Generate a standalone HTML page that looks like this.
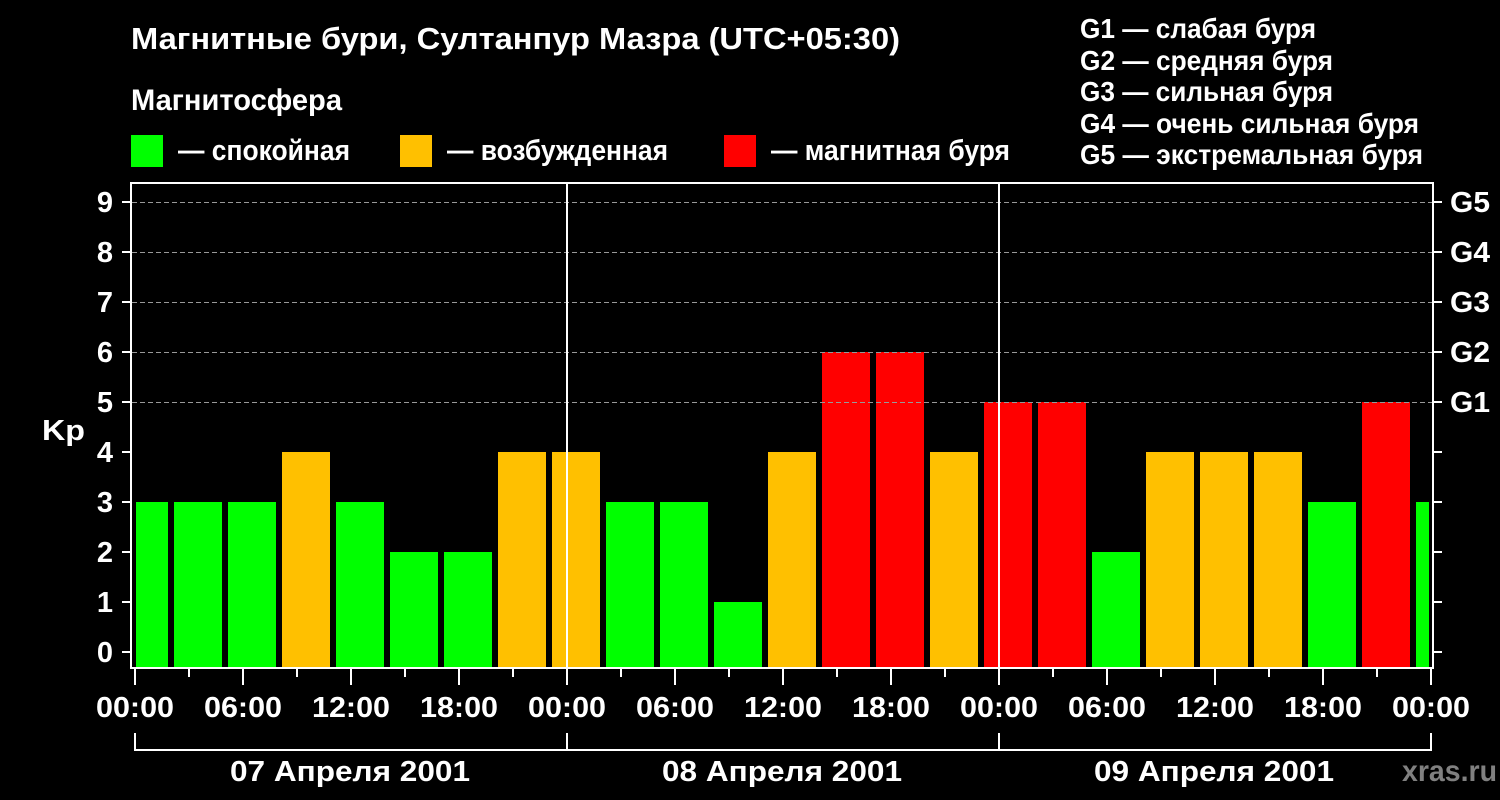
<!DOCTYPE html>
<html><head><meta charset="utf-8"><style>
html,body{margin:0;padding:0;background:#000;}
svg{display:block;}
text{font-family:"Liberation Sans",Arial,sans-serif;font-weight:bold;fill:#fff;}
</style></head><body>
<svg width="1500" height="800" xmlns="http://www.w3.org/2000/svg">
<rect width="1500" height="800" fill="#000"/>
<text x="131" y="49" font-size="31" textLength="769" lengthAdjust="spacingAndGlyphs">Магнитные бури, Султанпур Мазра (UTC+05:30)</text>
<text x="131" y="110" font-size="30" textLength="211" lengthAdjust="spacingAndGlyphs">Магнитосфера</text>
<rect x="131" y="135" width="32" height="32" fill="#00ff00"/>
<text x="178" y="160" font-size="29" textLength="172" lengthAdjust="spacingAndGlyphs">— спокойная</text>
<rect x="400" y="135" width="32" height="32" fill="#ffc000"/>
<text x="447" y="160" font-size="29" textLength="221" lengthAdjust="spacingAndGlyphs">— возбужденная</text>
<rect x="724" y="135" width="32" height="32" fill="#ff0000"/>
<text x="771" y="160" font-size="29" textLength="239" lengthAdjust="spacingAndGlyphs">— магнитная буря</text>
<g font-size="28">
<text x="1080" y="38" textLength="236" lengthAdjust="spacingAndGlyphs">G1 — слабая буря</text>
<text x="1080" y="70" textLength="253" lengthAdjust="spacingAndGlyphs">G2 — средняя буря</text>
<text x="1080" y="101" textLength="253" lengthAdjust="spacingAndGlyphs">G3 — сильная буря</text>
<text x="1080" y="133" textLength="339" lengthAdjust="spacingAndGlyphs">G4 — очень сильная буря</text>
<text x="1080" y="164" textLength="343" lengthAdjust="spacingAndGlyphs">G5 — экстремальная буря</text>
</g>
<svg x="132" y="183" width="1300" height="485" viewBox="132 183 1300 485" overflow="hidden">
<rect x="120" y="502" width="48" height="166" fill="#00ff00"/>
<rect x="174" y="502" width="48" height="166" fill="#00ff00"/>
<rect x="228" y="502" width="48" height="166" fill="#00ff00"/>
<rect x="282" y="452" width="48" height="216" fill="#ffc000"/>
<rect x="336" y="502" width="48" height="166" fill="#00ff00"/>
<rect x="390" y="552" width="48" height="116" fill="#00ff00"/>
<rect x="444" y="552" width="48" height="116" fill="#00ff00"/>
<rect x="498" y="452" width="48" height="216" fill="#ffc000"/>
<rect x="552" y="452" width="48" height="216" fill="#ffc000"/>
<rect x="606" y="502" width="48" height="166" fill="#00ff00"/>
<rect x="660" y="502" width="48" height="166" fill="#00ff00"/>
<rect x="714" y="602" width="48" height="66" fill="#00ff00"/>
<rect x="768" y="452" width="48" height="216" fill="#ffc000"/>
<rect x="822" y="352" width="48" height="316" fill="#ff0000"/>
<rect x="876" y="352" width="48" height="316" fill="#ff0000"/>
<rect x="930" y="452" width="48" height="216" fill="#ffc000"/>
<rect x="984" y="402" width="48" height="266" fill="#ff0000"/>
<rect x="1038" y="402" width="48" height="266" fill="#ff0000"/>
<rect x="1092" y="552" width="48" height="116" fill="#00ff00"/>
<rect x="1146" y="452" width="48" height="216" fill="#ffc000"/>
<rect x="1200" y="452" width="48" height="216" fill="#ffc000"/>
<rect x="1254" y="452" width="48" height="216" fill="#ffc000"/>
<rect x="1308" y="502" width="48" height="166" fill="#00ff00"/>
<rect x="1362" y="402" width="48" height="266" fill="#ff0000"/>
<rect x="1416" y="502" width="48" height="166" fill="#00ff00"/>
<rect x="1429" y="183" width="10" height="490" fill="#000"/>
<rect x="130" y="183" width="6" height="490" fill="#000"/>
</svg>
<g stroke="#999" stroke-width="1" stroke-dasharray="5,3">
<line x1="132" y1="202.5" x2="1432" y2="202.5"/>
<line x1="132" y1="252.5" x2="1432" y2="252.5"/>
<line x1="132" y1="302.5" x2="1432" y2="302.5"/>
<line x1="132" y1="352.5" x2="1432" y2="352.5"/>
<line x1="132" y1="402.5" x2="1432" y2="402.5"/>
</g>
<g stroke="#fff" stroke-width="2" fill="none">
<line x1="567" y1="182" x2="567" y2="668"/>
<line x1="999" y1="182" x2="999" y2="668"/>
<rect x="131" y="183" width="1302" height="485"/>
<path d="M122 202H131M122 252H131M122 302H131M122 352H131M122 402H131M122 452H131M122 502H131M122 552H131M122 602H131M122 652H131"/>
<path d="M1433 202H1442M1433 252H1442M1433 302H1442M1433 352H1442M1433 402H1442M1433 452H1442M1433 502H1442M1433 552H1442M1433 602H1442M1433 652H1442"/>
<path d="M135 668V685M243 668V685M351 668V685M459 668V685M567 668V685M675 668V685M783 668V685M891 668V685M999 668V685M1107 668V685M1215 668V685M1323 668V685M1431 668V685"/>
<path d="M189 668V677M297 668V677M405 668V677M513 668V677M621 668V677M729 668V677M837 668V677M945 668V677M1053 668V677M1161 668V677M1269 668V677M1377 668V677"/>
<path d="M135 733V750H1431V733M567 733V750M999 733V750"/>
</g>
<g font-size="29" text-anchor="middle">
<text x="105" y="212">9</text><text x="105" y="262">8</text><text x="105" y="312">7</text><text x="105" y="362">6</text><text x="105" y="412">5</text><text x="105" y="462">4</text><text x="105" y="512">3</text><text x="105" y="562">2</text><text x="105" y="612">1</text><text x="105" y="662">0</text>
</g>
<text x="42" y="440" font-size="29" textLength="43" lengthAdjust="spacingAndGlyphs">Kp</text>
<g font-size="29">
<text x="1450" y="212" textLength="40" lengthAdjust="spacingAndGlyphs">G5</text><text x="1450" y="262" textLength="40" lengthAdjust="spacingAndGlyphs">G4</text><text x="1450" y="312" textLength="40" lengthAdjust="spacingAndGlyphs">G3</text><text x="1450" y="362" textLength="40" lengthAdjust="spacingAndGlyphs">G2</text><text x="1450" y="412" textLength="40" lengthAdjust="spacingAndGlyphs">G1</text>
</g>
<g font-size="29" text-anchor="middle">
<text x="135" y="717" textLength="78" lengthAdjust="spacingAndGlyphs">00:00</text><text x="243" y="717" textLength="78" lengthAdjust="spacingAndGlyphs">06:00</text><text x="351" y="717" textLength="78" lengthAdjust="spacingAndGlyphs">12:00</text><text x="459" y="717" textLength="78" lengthAdjust="spacingAndGlyphs">18:00</text>
<text x="567" y="717" textLength="78" lengthAdjust="spacingAndGlyphs">00:00</text><text x="675" y="717" textLength="78" lengthAdjust="spacingAndGlyphs">06:00</text><text x="783" y="717" textLength="78" lengthAdjust="spacingAndGlyphs">12:00</text><text x="891" y="717" textLength="78" lengthAdjust="spacingAndGlyphs">18:00</text>
<text x="999" y="717" textLength="78" lengthAdjust="spacingAndGlyphs">00:00</text><text x="1107" y="717" textLength="78" lengthAdjust="spacingAndGlyphs">06:00</text><text x="1215" y="717" textLength="78" lengthAdjust="spacingAndGlyphs">12:00</text><text x="1323" y="717" textLength="78" lengthAdjust="spacingAndGlyphs">18:00</text>
<text x="1431" y="717" textLength="78" lengthAdjust="spacingAndGlyphs">00:00</text>
<text x="350" y="781" textLength="240" lengthAdjust="spacingAndGlyphs">07 Апреля 2001</text>
<text x="782" y="781" textLength="240" lengthAdjust="spacingAndGlyphs">08 Апреля 2001</text>
<text x="1214" y="781" textLength="240" lengthAdjust="spacingAndGlyphs">09 Апреля 2001</text>
</g>
<text x="1402" y="781" font-size="30" style="fill:#808080" textLength="95" lengthAdjust="spacingAndGlyphs">xras.ru</text>
</svg>
</body></html>
